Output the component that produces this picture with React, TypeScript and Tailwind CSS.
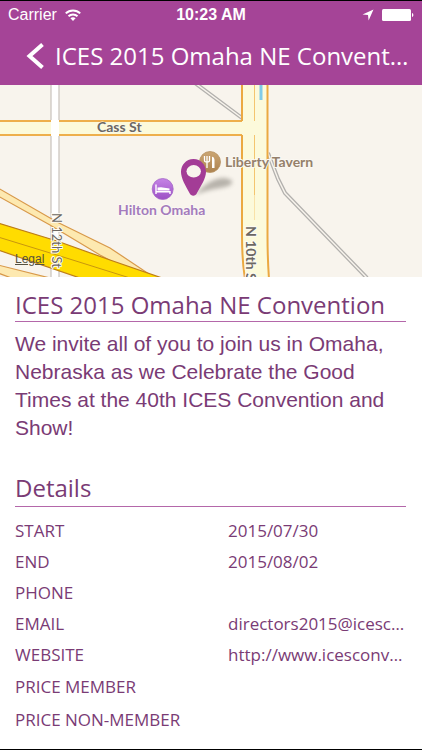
const EVENT_NAME = 'ICES 2015 Omaha NE Convention';

const DETAILS = [
  { label: 'START', value: '2015/07/30' },
  { label: 'END', value: '2015/08/02' },
  { label: 'PHONE', value: '' },
  { label: 'EMAIL', value: 'directors2015@icesconvention.org', href: 'mailto:directors2015@icesconvention.org' },
  { label: 'WEBSITE', value: 'http://www.icesconvention.org', href: 'http://www.icesconvention.org' },
];

const PRICES = [
  { label: 'PRICE MEMBER', value: '' },
  { label: 'PRICE NON-MEMBER', value: '' },
];

function StatusBar() {
  return (
    <div className="grid grid-cols-3 items-center h-7 px-2 font-['Liberation_Sans',sans-serif] text-base leading-7">
      <div className="flex items-center gap-2">
        <span>Carrier</span>
        <svg className="w-4 h-3" viewBox="0 0 16 12" fill="none" stroke="currentColor" strokeWidth="2">
          <path d="M0.8 4.4C4.8 0.4 11.2 0.4 15.2 4.4" />
          <path d="M3.5 7.2C6 4.8 10 4.8 12.5 7.2" />
          <path d="M8 12L5.4 9.2C6.9 7.9 9.1 7.9 10.6 9.2Z" fill="currentColor" stroke="none" />
        </svg>
      </div>
      <span className="text-center font-bold whitespace-nowrap">10:23 AM</span>
      <div className="flex items-center justify-end gap-2">
        <svg className="w-3 h-3" viewBox="0 0 12 12" fill="currentColor">
          <path d="M11.5 0.5L6.6 11.5L6 6L0.5 5.4Z" />
        </svg>
        <svg className="w-8 h-3" viewBox="0 0 32 12" fill="currentColor">
          <rect x="0" y="0" width="29" height="12" rx="1.5" />
          <path d="M30 4C31.8 4.4 31.8 7.6 30 8Z" />
        </svg>
      </div>
    </div>
  );
}

function Header() {
  return (
    <header className="bg-[#a54497] text-white border-t border-black">
      <StatusBar />
      <div className="flex items-center h-14 pl-6 pr-[10px] pb-[2px] gap-[7px]">
        <button type="button" aria-label="Back" className="shrink-0 w-6 h-8 flex items-center justify-center">
          <svg className="w-5 h-7" viewBox="0 0 20 28" fill="none" stroke="currentColor" strokeWidth="4">
            <path d="M16.5 2.5L3.5 14L16.5 25.5" />
          </svg>
        </button>
        <h1 className="truncate text-2xl leading-8">{EVENT_NAME}</h1>
      </div>
    </header>
  );
}

function EventMap() {
  return (
    <div className="relative h-48 overflow-hidden bg-[#f8f4ed]">
      <svg className="w-full h-full" viewBox="0 0 422 192" preserveAspectRatio="xMidYMid slice">
        <defs>
          <filter id="pin-shadow" x="-50%" y="-50%" width="200%" height="200%">
            <feGaussianBlur stdDeviation="2" />
          </filter>
          <linearGradient id="hotel" x1="0" y1="0" x2="0" y2="1">
            <stop offset="0" stopColor="#c583e6" />
            <stop offset="1" stopColor="#9c50c4" />
          </linearGradient>
          <linearGradient id="food" x1="0" y1="0" x2="0" y2="1">
            <stop offset="0" stopColor="#cba573" />
            <stop offset="1" stopColor="#ad8350" />
          </linearGradient>
        </defs>

        {/* Railway tracks */}
        <g fill="none">
          <path d="M195 -2L242 33M268 68L278 94L285 108L367 193" stroke="#b3b1ae" strokeWidth="4" />
          <path d="M195 -2L242 33M268 68L278 94L285 108L367 193" stroke="#f8f4ed" strokeWidth="1.4" />
        </g>

        {/* Cass St */}
        <rect x="-2" y="36" width="246" height="14" fill="#fcfadb" />
        <path d="M-2 36H242M-2 50H242" stroke="#eeaf4c" strokeWidth="2" />

        {/* N 12th St */}
        <rect x="51" y="-2" width="8" height="196" fill="#fff" />
        <path d="M51 -2V35M59 -2V35M51 51V194M59 51V194" stroke="#c9c2bc" strokeWidth="1.2" />

        {/* N 10th St */}
        <path d="M242 -2V150C242 168 243 182 245 194H269C268 180 267.5 168 267.5 150V-2Z" fill="#fcfadb" />
        <path d="M242 -2V36M242 50V150C242 168 243 182 245 194M267.5 -2V150C267.5 168 268 180 269 194" fill="none" stroke="#eba941" strokeWidth="2" />
        <path d="M254.5 -2V36M254.5 50V110" stroke="#f4c56f" strokeWidth="1" />
        <path d="M254.5 110V135" stroke="#f9e2a8" strokeWidth="1" />
        <path d="M261 -2V15" stroke="#7fcbe8" strokeWidth="3" />

        {/* Ramps and highway */}
        <g stroke="#d8994a" strokeWidth="1.2">
          <path d="M-2 103L57 137L110 163L152 191V196H140L115 178L100 170L50 140L-2 111Z" fill="#fde9b0" />
          <path d="M-2 180L50 193L30 200L-2 188Z" fill="#fde9b0" />
          <path d="M-2 138L57 156L110 175L165 194V200H84L80 193L-2 165Z" fill="#ffdc00" stroke="#bd7d18" />
          <path d="M-2 152L60 171L130 193" fill="none" stroke="#c8960e" strokeWidth="1" />
        </g>

        {/* Street names */}
        <g className="font-['Lato',sans-serif] font-bold text-[14px]" fill="#6c6863" stroke="#fdfbf4" strokeWidth="2" paintOrder="stroke">
          <text x="97" y="47" strokeWidth="1">Cass St</text>
          <text transform="translate(52 128) rotate(90)" className="font-normal text-[13px]">N 12th St</text>
          <text transform="translate(246 141) rotate(90)">N 10th St</text>
        </g>

        {/* Places */}
        <g className="font-['Lato',sans-serif] font-bold text-[14px]" stroke="#fbf8f2" strokeWidth="2" paintOrder="stroke">
          <text x="225" y="82" fill="#95806a">Liberty Tavern</text>
          <text x="118" y="130" fill="#a47bbd">Hilton Omaha</text>
        </g>
        <circle cx="162.7" cy="104" r="10.5" fill="url(#hotel)" stroke="#a468c6" strokeWidth="0.8" />
        <path d="M156 99.5V109M156 106.7H170V109" fill="none" stroke="#fff" strokeWidth="1.4" />
        <path d="M157.5 102.5L161 102.2L169.5 103.6V105.4H157.5Z" fill="#fff" />
        <circle cx="210" cy="77" r="10.5" fill="url(#food)" stroke="#b69262" strokeWidth="0.8" />
        <path d="M204.5 71V75.5C204.5 77.5 209.5 77.5 209.5 75.5V71M207 71V83" fill="none" stroke="#fff" strokeWidth="1.3" />
        <path d="M212 83V72C212 71 214.5 72 214.5 75V83Z" fill="#fff" />

        {/* Pin */}
        <path d="M195 110C200 104 210 94 222 93C235 93 235 100 225 102C215 104 206 105 195 110Z" fill="#575149" opacity="0.4" filter="url(#pin-shadow)" />
        <path
          d="M193.5 74C186 74 181 80 181 87C181 93 185.5 101 189.5 108C191 111.5 195.5 111.5 197 108C201 101 206 93 206 87C206 80 201 74 193.5 74Z"
          fill="#a33c96"
        />
        <ellipse cx="193.7" cy="86.3" rx="7.2" ry="6.2" fill="#f8f4ed" />
      </svg>
      <a href="#legal" className="absolute left-[15px] bottom-[10px] font-['Liberation_Sans',sans-serif] text-xs leading-4 text-[#55503f] underline">
        Legal
      </a>
    </div>
  );
}

function DetailRow({ label, value, href }: { label: string; value: string; href?: string }) {
  return (
    <div className="grid grid-cols-[213px_1fr]">
      <dt>{label}</dt>
      <dd className="truncate">{href ? <a href={href}>{value}</a> : value}</dd>
    </div>
  );
}

export default function App() {
  return (
    <div className="min-h-screen flex flex-col bg-white text-[#7a3b75] font-['Open_Sans',sans-serif] border-b border-black">
      <Header />
      <EventMap />

      <main className="flex-1 pl-[15px] pr-4">
        <section>
          <h2 className="pt-3 text-2xl leading-8 border-b border-[#b467aa]">{EVENT_NAME}</h2>
          <p className="pt-2 font-['Liberation_Sans',sans-serif] text-[21px] leading-7">
            We invite all of you to join us in Omaha, Nebraska as we Celebrate the Good Times at the 40th ICES Convention
            and Show!
          </p>
        </section>

        <section className="pt-7">
          <h2 className="text-2xl leading-9 border-b border-[#b467aa]">Details</h2>
          <dl className="pt-2 text-[17px]">
            <div className="leading-[31px]">
              {DETAILS.map((row) => (
                <DetailRow key={row.label} {...row} />
              ))}
            </div>
            <div className="leading-[33px]">
              {PRICES.map((row) => (
                <DetailRow key={row.label} {...row} />
              ))}
            </div>
          </dl>
        </section>
      </main>
    </div>
  );
}
